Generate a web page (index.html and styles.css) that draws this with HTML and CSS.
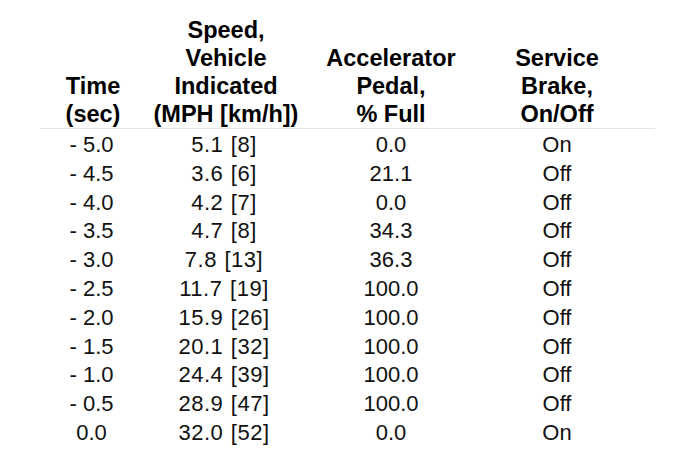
FILE: index.html
```html
<!DOCTYPE html>
<html>
<head>
<meta charset="utf-8">
<link rel="stylesheet" href="styles.css">
</head>
<body>
<div class="sheet">
  <div class="grid head">
    <div class="cell">Time<br>(sec)</div>
    <div class="cell">Speed,<br>Vehicle<br>Indicated<br>(MPH [km/h])</div>
    <div class="cell">Accelerator<br>Pedal,<br>% Full</div>
    <div class="cell">Service<br>Brake,<br>On/Off</div>
  </div>
  <div class="grid body">
    <div class="cell">- 5.0</div><div class="cell">5.1 [8]</div><div class="cell">0.0</div><div class="cell">On</div>
    <div class="cell">- 4.5</div><div class="cell">3.6 [6]</div><div class="cell">21.1</div><div class="cell">Off</div>
    <div class="cell">- 4.0</div><div class="cell">4.2 [7]</div><div class="cell">0.0</div><div class="cell">Off</div>
    <div class="cell">- 3.5</div><div class="cell">4.7 [8]</div><div class="cell">34.3</div><div class="cell">Off</div>
    <div class="cell">- 3.0</div><div class="cell">7.8 [13]</div><div class="cell">36.3</div><div class="cell">Off</div>
    <div class="cell">- 2.5</div><div class="cell">11.7 [19]</div><div class="cell">100.0</div><div class="cell">Off</div>
    <div class="cell">- 2.0</div><div class="cell">15.9 [26]</div><div class="cell">100.0</div><div class="cell">Off</div>
    <div class="cell">- 1.5</div><div class="cell">20.1 [32]</div><div class="cell">100.0</div><div class="cell">Off</div>
    <div class="cell">- 1.0</div><div class="cell">24.4 [39]</div><div class="cell">100.0</div><div class="cell">Off</div>
    <div class="cell">- 0.5</div><div class="cell">28.9 [47]</div><div class="cell">100.0</div><div class="cell">Off</div>
    <div class="cell">0.0</div><div class="cell">32.0 [52]</div><div class="cell">0.0</div><div class="cell">On</div>
  </div>
</div>
</body>
</html>
```
FILE: styles.css
```css
html, body {
  margin: 0;
  padding: 0;
  background: #ffffff;
}
body {
  font-family: "Liberation Sans", Arial, sans-serif;
  color: #111111;
}
.sheet {
  width: 615px;
  margin-left: 40px;
  padding-top: 16px;
}
.grid {
  display: grid;
  grid-template-columns: 106px 160px 170px 162px;
  padding-right: 17px;
}
.head {
  align-items: end;
  font-weight: bold;
  font-size: 23.5px;
  line-height: 28px;
  color: #000000;
  border-bottom: 1px solid #e4e4e4;
}
.body {
  padding-top: 2px;
  font-size: 22px;
  line-height: 28.8px;
}
.body .cell:nth-child(4n+1) {
  padding-right: 3px;
}
.body .cell:nth-child(4n+2) {
  letter-spacing: 0.5px;
  word-spacing: 1px;
  padding-right: 4px;
}
.cell {
  text-align: center;
  white-space: nowrap;
}
```
